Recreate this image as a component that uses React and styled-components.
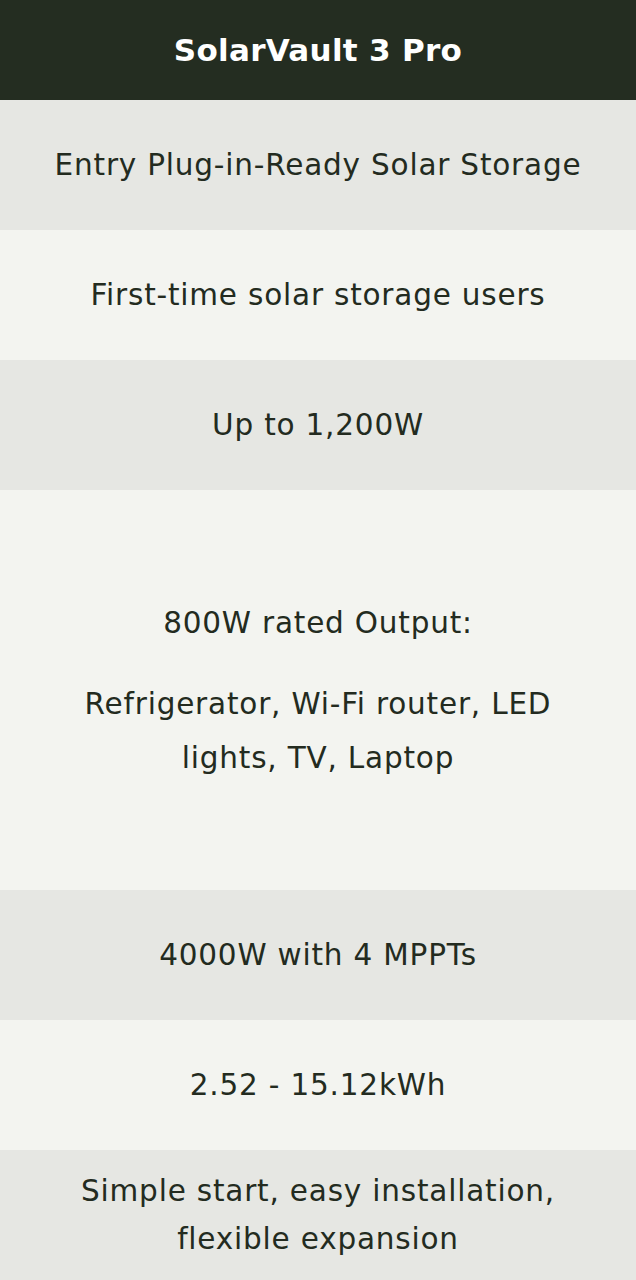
import React from 'react';
import styled, { createGlobalStyle } from 'styled-components';

const GlobalStyle = createGlobalStyle`
    html, body {
        margin: 0;
        padding: 0;
        background: #f3f4f0;
    }
    body {
        font-family: 'DejaVu Sans', 'Noto Sans', sans-serif;
        color: #232b20;
    }
`;

const SpecColumn = styled.div`
    display: flex;
    flex-direction: column;
    width: 636px;
`;

const SpecHeader = styled.div`
    display: flex;
    align-items: center;
    justify-content: center;
    height: 100px;
    background: #242d21;
    color: #ffffff;
    font-size: 31px;
    font-weight: 700;
    letter-spacing: 0.3px;
`;

const SpecRow = styled.div`
    display: flex;
    flex-direction: column;
    align-items: center;
    justify-content: center;
    gap: ${p => p.$gap || 0}px;
    height: ${p => p.$height || 130}px;
    padding: 0 20px;
    box-sizing: border-box;
    background: ${p => (p.$shade ? '#e6e7e3' : '#f3f4f0')};
    font-size: 29.5px;
    letter-spacing: 0.8px;
    line-height: ${p => p.$lh || 48}px;
    text-align: center;
`;

const SpecText = styled.p`
    margin: 0;
    white-space: pre-line;
`;

const rows = [
    { text: ['Entry Plug-in-Ready Solar Storage'] },
    { text: ['First-time solar storage users'] },
    { text: ['Up to 1,200W'] },
    { text: ['800W rated Output:', 'Refrigerator, Wi-Fi router, LED\nlights, TV, Laptop'], height: 400, gap: 27, lh: 54 },
    { text: ['4000W with 4 MPPTs'] },
    { text: ['2.52 - 15.12kWh'] },
    { text: ['Simple start, easy installation,\nflexible expansion'] },
];

export default function App() {
    return (
        <>
            <GlobalStyle />
            <SpecColumn>
                <SpecHeader>SolarVault 3 Pro</SpecHeader>
                {rows.map((row, i) => (
                    <SpecRow key={i} $shade={i % 2 === 0} $height={row.height} $gap={row.gap} $lh={row.lh}>
                        {row.text.map(t => (
                            <SpecText key={t}>{t}</SpecText>
                        ))}
                    </SpecRow>
                ))}
            </SpecColumn>
        </>
    );
}
